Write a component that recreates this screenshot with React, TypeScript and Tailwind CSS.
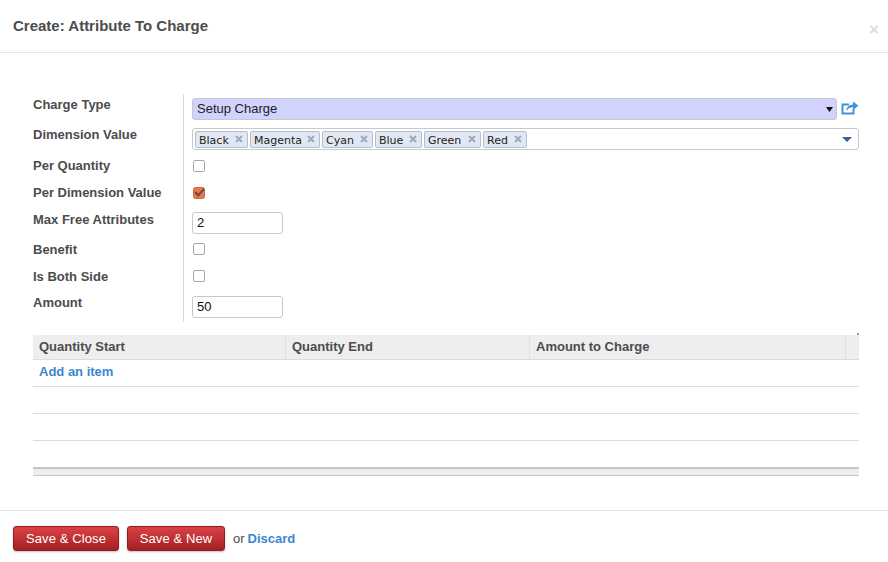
const sans = "font-['Liberation_Sans',Arial,sans-serif]";

const tags = [
  { name: 'Black', width: 'w-[53px]' },
  { name: 'Magenta', width: 'w-[70px]' },
  { name: 'Cyan', width: 'w-[51px]' },
  { name: 'Blue', width: 'w-[47px]' },
  { name: 'Green', width: 'w-[57px]' },
  { name: 'Red', width: 'w-[44px]' },
];

function Check({ checked, lift }: { checked?: boolean; lift?: boolean }) {
  if (checked) {
    return (
      <svg width="14" height="14" viewBox="0 0 14 14" className="ml-[-1px] mt-[-1px]">
        <rect x="1.5" y="1.5" width="11" height="11" rx="2" fill="#e5794f" stroke="#cf6843" />
        <path d="M3.2 6 L6.2 9.5 L12 2.8" fill="none" stroke="#6e4a3c" strokeWidth="2" />
      </svg>
    );
  }
  return (
    <div className={lift ? 'mt-[-1px] h-[12px] w-[12px] rounded-[2px] border border-[#a8a8a8] bg-white' : 'h-[12px] w-[12px] rounded-[2px] border border-[#a8a8a8] bg-white'} />
  );
}

function Row({ label, tall, drop, children }: { label: string; tall?: boolean; drop?: boolean; children: React.ReactNode }) {
  return (
    <div className={tall ? 'flex h-[30px]' : 'flex h-[27px]'}>
      <div className={tall && !drop ? 'w-[150px] pt-[3px] font-bold leading-[15px]' : 'w-[150px] pt-[4px] font-bold leading-[15px]'}>{label}</div>
      <div className={tall ? 'flex-1 border-l border-[#d9d9d9] pl-[8px] pt-[4px]' : 'flex-1 border-l border-[#d9d9d9] pl-[9px] pt-[6px]'}>{children}</div>
    </div>
  );
}

function NumberBox({ value }: { value: string }) {
  return (
    <div className="flex h-[22px] w-[91px] items-center rounded-[3px] border border-[#c8c8c8] bg-white pl-[4px] text-[#111]">
      {value}
    </div>
  );
}

export default function App() {
  return (
    <div className={`${sans} h-[562px] w-[888px] overflow-hidden bg-white text-[13px] text-[#4c4c4c]`}>
      <div className="relative flex h-[53px] items-center border-b border-[#e5e5e5] pl-[13px] pt-[1px]">
        <h1 className="text-[15px] font-bold">Create: Attribute To Charge</h1>
        <span className="absolute left-[869px] top-[20px] text-[17px] font-bold leading-[20px] text-[#dcdcdc]">×</span>
      </div>

      <div className="ml-[33px] mr-[29px] mt-[41px]">
        <Row label="Charge Type" tall>
          <div className="flex items-center">
            <div className="flex h-[22px] w-[645px] items-center justify-between rounded-[3px] border border-[#c8c8c8] bg-[#d2d2ff] pl-[4px] pr-[3px] text-[#222]">
              Setup Charge
              <svg width="7" height="5" viewBox="0 0 7 5"><path d="M0 0H7L3.5 5Z" fill="#111" /></svg>
            </div>
            <svg width="18" height="14" viewBox="0 0 18 14" className="ml-[4px] mt-[-3px]">
              <path d="M8 3.5H1.5V12.5H12.5V8" fill="none" stroke="#4393dc" strokeWidth="2" />
              <path d="M5 10C5.5 6 8.5 3.8 12 3.6V0.5L17.5 4.8L12 9V6.2C9 6.2 6.8 7.5 5 10Z" fill="#4393dc" />
            </svg>
          </div>
        </Row>
        <Row label="Dimension Value" tall>
          <div className="flex h-[22px] w-[667px] items-center rounded-[3px] border border-[#c8c8c8] bg-white pl-[2px] pr-[6px]">
            <div className="flex flex-1 gap-[2px]">
              {tags.map((tag) => (
                <span
                  key={tag.name}
                  className={`${tag.width} flex h-[17px] items-center justify-between rounded-[2px] border border-[#aebfd8] bg-[#e2e8f3] pl-[3px] pr-[4px] pt-[4px] font-['DejaVu_Sans',sans-serif] text-[11px] text-[#222]`}
                >
                  {tag.name}
                  <svg width="8" height="8" viewBox="0 0 8 8" className="mt-[-4px]">
                    <path d="M1 1L7 7M7 1L1 7" fill="none" stroke="#9aaac2" strokeWidth="2" />
                  </svg>
                </span>
              ))}
            </div>
            <svg width="10" height="5" viewBox="0 0 10 5"><path d="M0 0H10L5 5Z" fill="#3a5f9e" /></svg>
          </div>
        </Row>
        <Row label="Per Quantity"><Check /></Row>
        <Row label="Per Dimension Value"><Check checked /></Row>
        <Row label="Max Free Attributes" tall drop><NumberBox value="2" /></Row>
        <Row label="Benefit"><Check lift /></Row>
        <Row label="Is Both Side"><Check lift /></Row>
        <Row label="Amount" tall><NumberBox value="50" /></Row>
      </div>

      <div className="relative ml-[33px] mr-[29px] mt-[13px]">
        <div className="absolute right-0 top-[-2px] h-[2px] w-[2px] bg-[#999]" />
        <div className="flex h-[25px] border-b border-[#dcdcdc] bg-[#eeeeee] font-bold leading-[24px]">
          <div className="w-[253px] border-r border-[#e0e0e0] pl-[6px]">Quantity Start</div>
          <div className="w-[244px] border-r border-[#e0e0e0] pl-[6px]">Quantity End</div>
          <div className="w-[316px] border-r border-[#e0e0e0] pl-[6px]">Amount to Charge</div>
          <div className="flex-1" />
        </div>
        <div className="h-[27px] border-b border-[#dcdcdc] pl-[6px] font-bold leading-[24px] text-[#3a87d0]">Add an item</div>
        <div className="h-[27px] border-b border-[#dcdcdc]" />
        <div className="h-[27px] border-b border-[#dcdcdc]" />
        <div className="mt-[26px] h-[9px] border-t-[2px] border-b-[1px] border-t-[#c6c6c6] border-b-[#c6c6c6] bg-[#eeeeee]" />
      </div>

      <div className="mt-[34px] flex h-[52px] items-start border-t border-[#e5e5e5] pl-[13px] pt-[15px]">
        <button className="h-[25px] w-[106px] rounded-[3px] border border-[#8a1f1f] bg-gradient-to-b from-[#dc4146] to-[#a31f22] text-[13px] tracking-[0.1px] text-white shadow-[0_1px_2px_rgba(0,0,0,0.25)]">
          Save &amp; Close
        </button>
        <button className="ml-[8px] h-[25px] w-[98px] rounded-[3px] border border-[#8a1f1f] bg-gradient-to-b from-[#dc4146] to-[#a31f22] text-[13px] tracking-[0.1px] text-white shadow-[0_1px_2px_rgba(0,0,0,0.25)]">
          Save &amp; New
        </button>
        <span className="ml-[8px] leading-[25px]">or</span>
        <a className="ml-[3px] font-bold leading-[25px] text-[#3a87d0]">Discard</a>
      </div>
    </div>
  );
}
